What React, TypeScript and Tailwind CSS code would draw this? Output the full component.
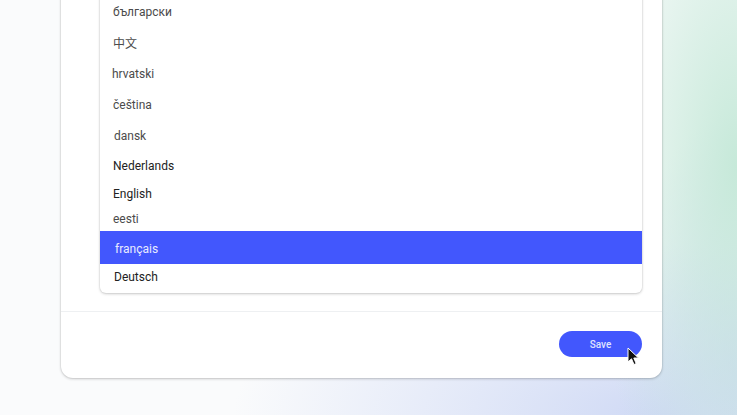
import React from "react";

const items: { label: string; h: string; pl: string; dark?: boolean; selected?: boolean }[] = [
  { label: "български", h: "h-[33px]", pl: "pl-[13px]" },
  { label: "中文", h: "h-[31px]", pl: "pl-[13px]" },
  { label: "hrvatski", h: "h-[30px]", pl: "pl-[12px]" },
  { label: "čeština", h: "h-[31px]", pl: "pl-[13px]" },
  { label: "dansk", h: "h-[30px] pt-[2px]", pl: "pl-[14px]" },
  { label: "Nederlands", h: "h-[29px] pt-[2px]", pl: "pl-[13px]", dark: true },
  { label: "English", h: "h-[27px] pt-[2px]", pl: "pl-[13px]", dark: true },
  { label: "eesti", h: "h-[25px] pt-[1px]", pl: "pl-[13px]" },
  { label: "français", h: "h-[33px] pt-[2px]", pl: "pl-[15px]", selected: true },
  { label: "Deutsch", h: "h-[24px] pt-[2px]", pl: "pl-[14px]", dark: true },
];

export default function App() {
  return (
    <div
      className="h-[415px] w-[737px] overflow-hidden bg-[#fafbfc] bg-[image:radial-gradient(ellipse_150px_380px_at_100%_40%,#c6e9d9_0%,rgba(198,233,217,0)_100%),radial-gradient(ellipse_430px_170px_at_90%_100%,#cfd9f5_0%,rgba(207,217,245,0)_100%),radial-gradient(ellipse_120px_260px_at_100%_90%,#cdd9f2_0%,rgba(205,217,242,0)_100%)]"
      style={{ fontFamily: 'Roboto, "Noto Sans CJK SC", sans-serif' }}
    >
      <div className="ml-[61px] mt-[-20px] w-[601px] rounded-b-[12px] bg-white shadow-[0_1px_3px_rgba(0,0,0,0.2),0_0_0_1px_rgba(0,0,0,0.04)]">
        <div className="px-[20px] pt-[15px] pb-[18px] pl-[39px]">
          <div className="overflow-hidden rounded-b-[6px] bg-white pb-[5px] shadow-[0_1px_3px_rgba(0,0,0,0.2),0_0_0_1px_rgba(0,0,0,0.03)]">
            {items.map((it) => (
              <div
                key={it.label}
                className={`flex items-center text-[12px] ${it.h} ${it.pl} ${
                  it.selected
                    ? "bg-[#4257fd] text-[#e8ebff]"
                    : it.dark
                    ? "text-[#222222]"
                    : "text-[#4b4b4b]"
                }`}
              >
                {it.label}
              </div>
            ))}
          </div>
        </div>
        <div className="h-px bg-[#eef0f2]" />
        <div className="flex justify-end px-[20px] pt-[19px] pb-[21px]">
          <div className="relative">
            <button className="flex h-[26px] w-[83px] items-center justify-center rounded-full bg-[#4257fd] text-[10px] font-medium text-[#dfe3ff]">
              Save
            </button>
            <svg
              className="absolute left-[68px] top-[16px]"
              width="13"
              height="19"
              viewBox="0 0 13 19"
            >
              <path
                d="M1 1 L1 15 L4.5 11.8 L7 17.5 L9.2 16.6 L6.8 11 L11.5 11 Z"
                fill="#111"
                stroke="#fff"
                strokeWidth="1"
                strokeLinejoin="round"
              />
            </svg>
          </div>
        </div>
      </div>
    </div>
  );
}
